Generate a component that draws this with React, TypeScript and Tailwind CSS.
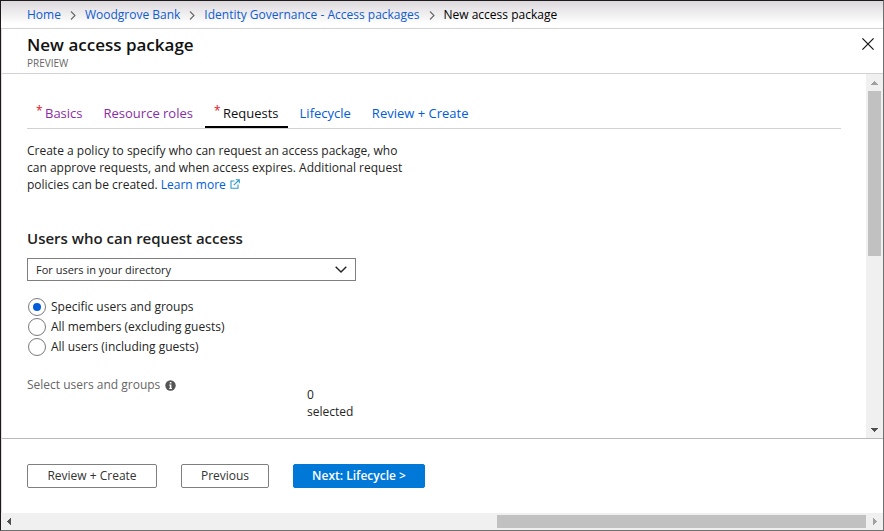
import { useState } from "react";

const crumbs = ["Home", "Woodgrove Bank", "Identity Governance - Access packages"];

const tabs = [
  { label: "Basics", required: true, color: "text-[#8a2da5]" },
  { label: "Resource roles", required: false, color: "text-[#8a2da5]" },
  { label: "Requests", required: true, color: "text-[#111111]" },
  { label: "Lifecycle", required: false, color: "text-[#015cda]" },
  { label: "Review + Create", required: false, color: "text-[#015cda]" },
];

const audiences = [
  "Specific users and groups",
  "All members (excluding guests)",
  "All users (including guests)",
];

function Triangle({ className, d }: { className: string; d: string }) {
  return (
    <svg width="7" height="7" viewBox="0 0 7 7" className={className} aria-hidden="true" shapeRendering="crispEdges">
      <path d={d} fill="currentColor" />
    </svg>
  );
}

function Breadcrumb() {
  return (
    <nav
      aria-label="Breadcrumb"
      className="flex h-7 shrink-0 items-center border-b border-[#d2d2d2] bg-linear-to-b from-[#dcd9dc] to-white to-85% pt-px pl-[26px] text-[12px] leading-4"
    >
      {crumbs.map((c) => (
        <span key={c} className="flex items-center">
          <a href="#" className="text-[#0f5bd0] hover:underline">
            {c}
          </a>
          <svg width="6" height="9" viewBox="0 0 6 9" className="mx-[9px] text-[#666666]" fill="none" aria-hidden="true">
            <path d="M1 0.5 L5 4.5 L1 8.5" stroke="currentColor" strokeWidth="1.1" />
          </svg>
        </span>
      ))}
      <span aria-current="page" className="text-black">
        New access package
      </span>
    </nav>
  );
}

function PageHeader() {
  return (
    <header className="flex h-[45px] shrink-0 items-start justify-between border-b border-[#d2d2d2] pt-1 pr-[9px] pl-[25px]">
      <div>
        <h1 className="text-[17px] leading-6 font-semibold text-[#111111]">New access package</h1>
        <p className="text-[10px] leading-3 text-[#666666]">PREVIEW</p>
      </div>
      <button type="button" aria-label="Close" className="mt-[5px]">
        <svg width="12" height="12" viewBox="0 0 12 12" fill="none" aria-hidden="true">
          <path d="M0.4 0.4 L11.6 11.6 M11.6 0.4 L0.4 11.6" stroke="#111111" strokeWidth="1.2" />
        </svg>
      </button>
    </header>
  );
}

function Tabs() {
  const [active, setActive] = useState("Requests");
  return (
    <div role="tablist" className="flex h-[29px] gap-[3px] border-b border-[#d2d2d2] text-[13px] leading-5">
      {tabs.map((t) => (
        <button
          key={t.label}
          type="button"
          role="tab"
          aria-selected={active === t.label}
          onClick={() => setActive(t.label)}
          className={`flex h-7 items-start border-b-2 px-[9px] pt-[3px] ${t.color} ${
            active === t.label ? "border-black" : "border-transparent"
          }`}
        >
          {t.required && <span className="w-[9px] text-left text-[12px] leading-4 text-[#e81123]">*</span>}
          {t.label}
        </button>
      ))}
    </div>
  );
}

function RequestsForm() {
  const [audience, setAudience] = useState(audiences[0]);
  return (
    <form className="text-[12px] text-[#252525]">
      <p className="mt-[13px] w-[385px] leading-[17px]">
        Create a policy to specify who can request an access package, who can approve requests, and when access
        expires. Additional request policies can be created.{" "}
        <a href="#" className="text-[#015cda] hover:underline">
          Learn more
          <svg width="10" height="10" viewBox="0 0 10 10" fill="none" className="ml-1 inline-block align-baseline" aria-hidden="true">
            <path d="M4.5 2 H1 V9.2 H8 V5.5 M3.8 6.2 L9 1 M5.8 0.7 H9.3 V4.2" stroke="#2e9bc6" strokeWidth="1.1" />
          </svg>
        </a>
      </p>

      <h2 className="mt-[35px] text-[15px] leading-5 font-semibold text-[#222222]">
        <label htmlFor="scope">Users who can request access</label>
      </h2>
      <div className="mt-[10px] grid w-[329px] grid-cols-1 items-center">
        <select
          id="scope"
          className="col-start-1 row-start-1 h-[23px] appearance-none border border-[#7f7f7f] bg-white px-2 text-[11px] leading-4 text-[#252525]"
        >
          <option>For users in your directory</option>
        </select>
        <svg
          width="12"
          height="7"
          viewBox="0 0 12 7"
          fill="none"
          className="pointer-events-none col-start-1 row-start-1 mr-[9px] justify-self-end"
          aria-hidden="true"
        >
          <path d="M0.7 0.7 L6 6 L11.3 0.7" stroke="#222222" strokeWidth="1.4" />
        </svg>
      </div>

      <div role="radiogroup" aria-label="Request audience" className="mt-4">
        {audiences.map((a) => (
          <label key={a} className="flex h-5 items-center gap-[5px] pl-px">
            <input
              type="radio"
              name="audience"
              checked={audience === a}
              onChange={() => setAudience(a)}
              className="grid size-[18px] appearance-none place-items-center rounded-full border border-[#7a7a7a] bg-white before:size-2 before:rounded-full before:content-[''] checked:before:bg-[#015cda]"
            />
            {a}
          </label>
        ))}
      </div>

      <div className="mt-[19px] flex leading-[17px]">
        <div className="flex w-[280px] items-center gap-[5px] self-start text-[#666666]">
          Select users and groups
          <svg width="11" height="11" viewBox="0 0 11 11" className="mt-px" role="img" aria-label="More information">
            <circle cx="5.5" cy="5.5" r="5.2" fill="#555555" />
            <path d="M4.8 2 H6.4 V3.5 H4.8 Z M4.2 4.5 H6.4 V8 H7 V8.9 H4.2 V8 H4.8 V5.4 H4.2 Z" fill="#ffffff" />
          </svg>
        </div>
        <p className="mt-[10px] w-12">0 selected</p>
      </div>
    </form>
  );
}

function Footer() {
  const base = "h-6 rounded-xs border text-[12px] leading-4";
  return (
    <footer className="flex h-[75px] shrink-0 items-start gap-6 border-t border-[#b8b8b8] pt-[25px] pl-[25px]">
      <button type="button" className={`${base} w-[130px] border-[#7f7f7f] bg-white text-[#333333]`}>
        Review + Create
      </button>
      <button type="button" className={`${base} w-[88px] border-[#7f7f7f] bg-white text-[#333333]`}>
        Previous
      </button>
      <button type="button" className={`${base} w-[132px] border-[#0078d7] bg-[#0078d7] font-semibold text-white`}>
        Next: Lifecycle &gt;
      </button>
    </footer>
  );
}

export default function App() {
  return (
    <div className="flex h-screen flex-col border border-t-[#1c181c] border-r-[#6f6f6f] border-b-[#6f6f6f] border-l-[#1c181c] bg-white font-['Open_Sans','Noto_Sans',sans-serif]">
      <Breadcrumb />
      <div className="flex min-h-0 flex-1 flex-col border-l border-[#dddddd]">
        <PageHeader />
        <div className="flex min-h-0 flex-1">
          <main className="min-w-0 flex-1 overflow-hidden pt-[26px] pr-[25px] pl-[25px]">
            <Tabs />
            <RequestsForm />
          </main>
          <div className="flex w-[17px] flex-col items-center bg-[#f0f0f0] py-[5px]">
            <Triangle className="mt-px text-[#a0a0a0]" d="M0 5 H7 V4 H6 V3 H5 V2 H4 V1 H3 V2 H2 V3 H1 V4 H0 Z" />
            <div className="mt-1 h-[165px] w-[13px] bg-[#c1c1c1]" />
            <Triangle className="mt-auto text-[#505050]" d="M0 2 H7 V3 H6 V4 H5 V5 H4 V6 H3 V5 H2 V4 H1 V3 H0 Z" />
          </div>
        </div>
        <Footer />
      </div>
      <div className="flex h-[17px] shrink-0 items-center bg-[#f0f0f0] px-[5px]">
        <Triangle className="text-[#505050]" d="M5 0 V7 H4 V6 H3 V5 H2 V4 H1 V3 H2 V2 H3 V1 H4 V0 Z" />
        <div className="mr-[5px] ml-auto h-[13px] w-[369px] bg-[#c1c1c1]" />
        <Triangle className="text-[#a0a0a0]" d="M2 0 V7 H3 V6 H4 V5 H5 V4 H6 V3 H5 V2 H4 V1 H3 V0 Z" />
      </div>
    </div>
  );
}
